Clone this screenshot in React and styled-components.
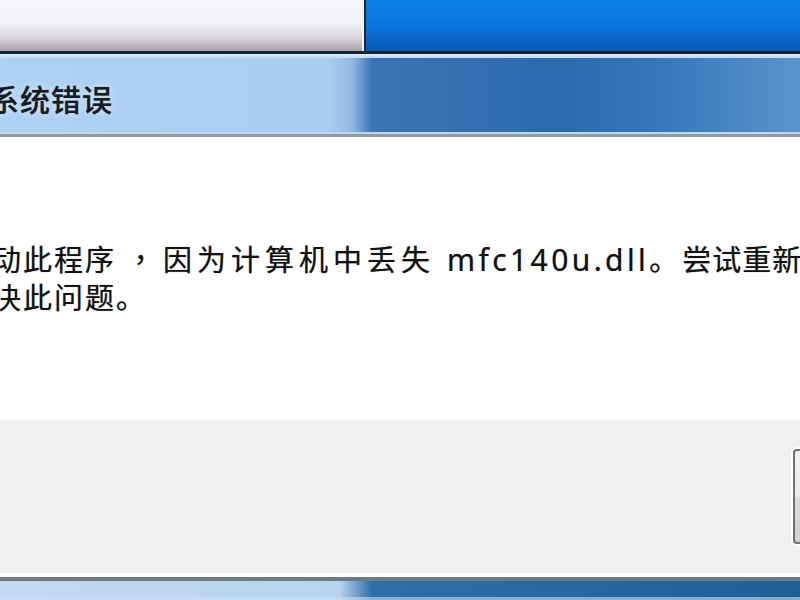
import styled, { createGlobalStyle } from "styled-components";

const Global = createGlobalStyle`
	html, body {
		margin: 0;
		padding: 0;
		background: #ffffff;
	}
	body {
		font-family: "Noto Sans", "Noto Sans CJK SC", sans-serif;
	}
`;

const Screen = styled.div`
	width: 800px;
	height: 600px;
	overflow: hidden;
	display: flex;
	flex-direction: column;
	background: #ffffff;
`;

/* window lying behind the dialog */
const BackWindow = styled.div`
	height: 51px;
	display: flex;
	border-bottom: 3px solid #14253b;
	flex-shrink: 0;
`;
const BackLeft = styled.div`
	width: 362px;
	background: linear-gradient(
		to bottom,
		#f8f6fc 0%,
		#f2f0f6 45%,
		#d8d4dc 75%,
		#a7a2aa 100%
	);
	border-right: 2px solid #f4f6fa;
`;
const BackRight = styled.div`
	flex: 1;
	border-left: 2px solid #0a2850;
	background: linear-gradient(to bottom, #0c7fe8 0%, #0a72dc 55%, #0858b4 100%);
`;

const Dialog = styled.div`
	flex: 1;
	display: flex;
	flex-direction: column;
	border-top: 2px solid #dbe9f7;
`;

const TitleBar = styled.div`
	height: 74px;
	flex-shrink: 0;
	display: flex;
	align-items: center;
	background: linear-gradient(
		to right,
		#afd1f3 0px,
		#a9ccf1 330px,
		#93b8e4 352px,
		#3a74b6 372px,
		#2c69ad 560px,
		#3676bb 660px,
		#4683c3 720px,
		#5b93cc 800px
	);
	border-top: 2px solid #c6dff6;
	border-bottom: 2px solid #c4d8ec;
	box-shadow: 0 3px 0 #8f9aa6;
	margin-bottom: 3px;
`;
const Title = styled.span`
	margin-left: -11px;
	margin-top: 6px;
	font-size: 30px;
	font-weight: 500;
	letter-spacing: 1px;
	color: #141c26;
	white-space: nowrap;
	text-shadow: 0 0 1px rgba(20, 28, 38, 0.6), 0 0 6px rgba(255, 255, 255, 0.8);
`;

const Content = styled.div`
	height: 283px;
	flex-shrink: 0;
	background: #ffffff;
	padding-top: 102px;
	box-sizing: border-box;
`;
const Message = styled.p`
	margin: 0 0 0 -8px;
	font-size: 29px;
	line-height: 38px;
	color: #121212;
	white-space: nowrap;
	letter-spacing: 2px;
	text-shadow: 0 0 1px rgba(0, 0, 0, 0.5);
`;
const Words = styled.span`
	letter-spacing: ${({ $spacing }) => $spacing}px;
	margin-right: ${({ $after = 0 }) => $after}px;
`;
const Comma = styled.span`
	font-family: "Noto Sans CJK TC", sans-serif;
	margin: 0 6px 0 10px;
`;
const FileName = styled.span`
	font-size: 30px;
	letter-spacing: 3.4px;
	margin-left: 12px;
`;

const ButtonArea = styled.div`
	height: 157px;
	flex-shrink: 0;
	background: #f0f0f0;
	display: flex;
	justify-content: flex-end;
	padding-top: 29px;
	box-sizing: border-box;
	border-bottom: 4px solid #ffffff;
`;
const Button = styled.div`
	width: 120px;
	height: 95px;
	margin-right: -113px;
	box-sizing: border-box;
	border: 2px solid #707070;
	border-radius: 4px;
	box-shadow: 0 0 0 2px #ffffff;
	background: linear-gradient(to bottom, #f2f2f2 0%, #ebebeb 50%, #dddddd 51%, #cfcfcf 100%);
`;

const FrameBottom = styled.div`
	flex: 1;
	border-top: 4px solid #6d7b88;
	background: linear-gradient(
		to right,
		#c3daf0 0px,
		#b9d3ee 340px,
		#2f6ea6 372px,
		#1f5f96 800px
	);
	box-shadow: inset 0 -3px 0 rgba(200, 225, 245, 0.6);
`;

const App = () => {
	return (
		<Screen>
			<Global />
			<BackWindow>
				<BackLeft />
				<BackRight />
			</BackWindow>
			<Dialog>
				<TitleBar>
					<Title>系统错误</Title>
				</TitleBar>
				<Content>
					<Message>
						<Words $spacing={2}>动此程序</Words>
						<Comma>，</Comma>
						<Words $spacing={5}>因为计算机中丢失</Words>
						<FileName>mfc140u.dll</FileName>
						<Words $spacing={0} $after={4}>。</Words>
						<Words $spacing={1}>尝试重新</Words>
					</Message>
					<Message>决此问题。</Message>
				</Content>
				<ButtonArea>
					<Button />
				</ButtonArea>
				<FrameBottom />
			</Dialog>
		</Screen>
	);
};
export default App;
